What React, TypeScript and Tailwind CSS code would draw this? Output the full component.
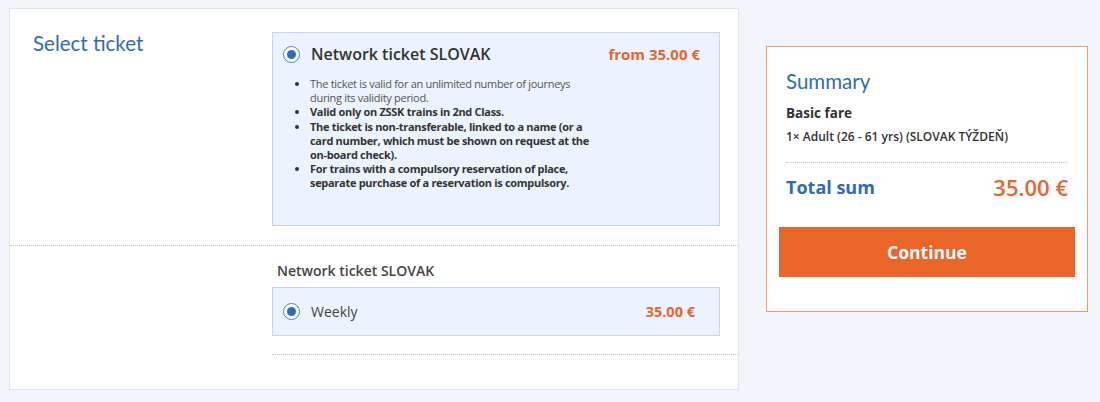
import { Fragment } from "react";

const bullets = [
  { text: "The ticket is valid for an unlimited number of journeys during its validity period.", bold: false },
  { text: "Valid only on ZSSK trains in 2nd Class.", bold: true },
  { text: "The ticket is non-transferable, linked to a name (or a card number, which must be shown on request at the on-board check).", bold: true },
  { text: "For trains with a compulsory reservation of place, separate purchase of a reservation is compulsory.", bold: true },
];

function Radio() {
  return (
    <span className="flex h-[17px] w-[17px] shrink-0 items-center justify-center rounded-full border border-[#4a7fc4] bg-white">
      <span className="h-[9px] w-[9px] rounded-full bg-[#2f6cc0]" />
    </span>
  );
}

export default function App() {
  return (
    <div
      className="flex h-[402px] w-[1100px] items-start gap-[27px] bg-[#f2f6fc] pl-[9px] pt-[8px] text-[#333]"
      style={{ fontFamily: '"Open Sans", sans-serif' }}
    >
      {/* Ticket selection */}
      <div className="flex h-[382px] w-[730px] flex-col border border-[#dde6f2] bg-white">
        <div className="flex h-[237px] border-b border-dotted border-[#b9c7da]">
          <h2 className="w-[262px] pl-[23px] pt-[22px] text-[20.5px] leading-6 text-[#2f6cb5]" style={{ fontFamily: "Lato, sans-serif" }}>
            Select ticket
          </h2>
          <div className="pt-[23px]">
            <div className="h-[194px] w-[448px] border border-[#c8d5e8] bg-[#ebf3fe] pl-[10px] pr-[19px] pt-[9px]">
              <div className="flex items-center">
                <Radio />
                <span className="ml-[11px] text-[16px] font-semibold text-[#333]">Network ticket SLOVAK</span>
                <span className="ml-auto text-[15px] font-bold text-[#e8652b]">from 35.00 €</span>
              </div>
              <ul className="mt-[11px] w-[314px] list-disc pl-[27px] text-[11px] leading-[14.2px] tracking-[-0.3px] marker:text-[#333]">
                {bullets.map((b) => (
                  <Fragment key={b.text}>
                    <li className={b.bold ? "font-bold text-[#333]" : "text-[#555]"}>{b.text}</li>
                  </Fragment>
                ))}
              </ul>
            </div>
          </div>
        </div>

        <div className="pl-[262px] pt-[14px]">
          <div className="pl-[5px] text-[14px] font-semibold text-[#444]">Network ticket SLOVAK</div>
          <div className="mt-[6px] flex h-[49px] w-[448px] items-center border border-[#c8d5e8] bg-[#ebf3fe] pl-[10px] pr-[24px]">
            <Radio />
            <span className="ml-[11px] text-[14px] text-[#444]">Weekly</span>
            <span className="ml-auto text-[14.5px] font-bold text-[#e8652b]">35.00 €</span>
          </div>
          <div className="mt-[18px] border-b border-dotted border-[#b9c7da]" />
        </div>
      </div>

      {/* Summary */}
      <div className="mt-[38px] w-[322px] border border-[#f09a6c] bg-white px-[12px] pb-[34px] pt-[22px]">
        <div className="px-[7px]">
          <h3 className="text-[20.5px] leading-6 text-[#2f6cb5]" style={{ fontFamily: "Lato, sans-serif" }}>
            Summary
          </h3>
          <div className="mt-[10px] text-[13.5px] font-bold text-[#333]">Basic fare</div>
          <div className="mt-[5px] text-[12px] font-semibold text-[#333]">1× Adult (26 - 61 yrs) (SLOVAK TÝŽDEŇ)</div>
          <div className="mt-[16px] border-b border-dotted border-[#b9c7da]" />
          <div className="mt-[8px] flex items-center justify-between">
            <span className="text-[18px] font-bold text-[#2f6cb5]">Total sum</span>
            <span className="text-[22px] font-semibold text-[#e8652b]">35.00 €</span>
          </div>
        </div>
        <button className="mt-[23px] h-[50px] w-full bg-[#e96628] text-[17.5px] font-bold text-white">Continue</button>
      </div>
    </div>
  );
}
